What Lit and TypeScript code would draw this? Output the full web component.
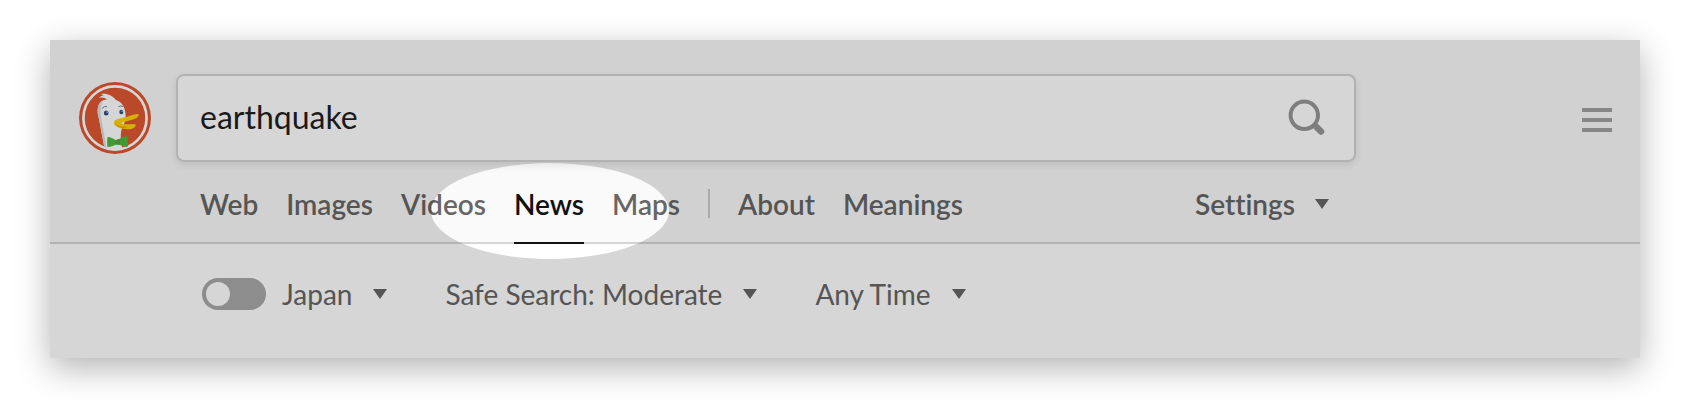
import { LitElement, html, css } from "lit";
import { customElement, property, state } from "lit/decorators.js";

const caret = html`<svg class="caret" width="14" height="10" viewBox="0 0 14 10" aria-hidden="true"><path d="M0 0h14L7 10z" fill="currentColor"/></svg>`;

@customElement("duck-logo")
export class DuckLogo extends LitElement {
  static styles = css`
    :host { display: block; }
    svg { display: block; width: 100%; }
  `;
  render() {
    return html`
      <svg viewBox="0 0 72 72" aria-hidden="true">
        <defs><clipPath id="disc"><circle cx="36" cy="36" r="31"/></clipPath></defs>
        <circle cx="36" cy="36" r="36" fill="#de5833"/>
        <circle cx="36" cy="36" r="31.600" fill="none" stroke="#fff" stroke-width="2.700"/>
        <g clip-path="url(#disc)">
          <path d="M26 69 L20 37 C17 28 19 20 25 18 L28 17.500 C26 15.500 23 15 20 15.800 C22 13.800 24 13.500 25 13.600 L22 12 C28 11 34 14 37 18 C43 20 46 25 46.500 32 C47 36 46 40 44 44 C41 50 41 57 44 69z" fill="#fff"/>
          <path d="M20 37 C17 28 19 20 24 18.500 C20 25 22 36 24 46 L28 69 L26 69z" fill="#ddd"/>
        </g>
        <path d="M35 41 C35 38 38 37 43 36 C49 35 54 32 59 32 C61 33 59 36 54 37.500 C49 39 44 40 42 41 C44 42.500 49 42.500 55 42 C58 42 57 46 52 47 C45 48 35 45 35 41z" fill="#fdd20a"/>
        <path d="M36 41.500 C38 44 44 44.500 49 45 C45 47.500 36 45 36 41.500z" fill="#f3ad00"/>
        <ellipse cx="27.200" cy="31" rx="2.400" ry="2.500" fill="#2d4f8e"/>
        <circle cx="28.100" cy="30.100" r=".7" fill="#fff"/>
        <ellipse cx="42.300" cy="30" rx="2" ry="2.300" fill="#2d4f8e"/>
        <circle cx="43" cy="29.200" r=".6" fill="#fff"/>
        <path d="M23 26.500 Q25 23.800 28 24.500 M39.500 24.500 Q41.500 23.500 44 24.500" fill="none" stroke="#6e86b6" stroke-width="1"/>
        <path d="M28.500 55 C32 55 35 57 37 58.500 C40 57 44 54.500 48 54 C49 57 49 61 48.500 65 C44 64.500 41 63 38.500 62 C35 63 32 65 28.500 65 C28 62 28 59 28.500 55z" fill="#4cba3c"/>
        <path d="M36.500 58 L40.500 57 C41.300 59 41.300 61 40.500 63 L36.500 62.500z" fill="#5b9e4d"/>
      </svg>`;
  }
}

@customElement("filter-select")
export class FilterSelect extends LitElement {
  @property() label = "";
  @property({ attribute: false }) options: string[] = [];
  static styles = css`
    :host { display: block; }
    .field { display: flex; align-items: center; gap: 21px; }
    select {
      appearance: none; field-sizing: content; border: 0; margin: 0; padding: 0;
      background: transparent; color: inherit; font: inherit; line-height: 36px; cursor: pointer;
    }
    .caret { flex: none; pointer-events: none; }
  `;
  render() {
    return html`<label class="field">
      <select aria-label=${this.label}>${this.options.map((o) => html`<option>${o}</option>`)}</select>${caret}
    </label>`;
  }
}

@customElement("app-root")
export class AppRoot extends LitElement {
  @state() private query = "earthquake";

  static styles = css`
    :host {
      display: block; background: #fff; color: #666; padding: 40px 50px 60px;
      font-family: Lato, "Open Sans", sans-serif; font-size: 28px; line-height: 36px;
      font-variant-ligatures: none;
    }
    * { box-sizing: border-box; }
    .panel { position: relative; overflow: hidden; background: #fff; box-shadow: 0 10px 32px rgba(0, 0, 0, .3); }
    .grid { display: grid; grid-template-columns: 72px minmax(0, 1180px) minmax(30px, 1fr); column-gap: 25px; padding: 0 28px 0 29px; }
    .header { background: #fafafa; border-bottom: 2px solid #d5d5d5; padding-top: 34px; align-items: center; }
    button { border: 0; padding: 0; margin: 0; background: none; font: inherit; color: inherit; cursor: pointer; }
    .search {
      display: flex; align-items: center; height: 88px; padding: 0 28px 0 22px;
      background: #fff; border: 2px solid #d4d4d4; border-radius: 8px; box-shadow: 0 3px 8px rgba(0, 0, 0, .1);
    }
    .query { flex: 1; min-width: 0; border: 0; outline: 0; padding: 0 0 2px; background: none; color: #1f1f1f; font: inherit; font-size: 32px; line-height: 44px; }
    .find { color: #979797; }
    svg { display: block; }
    .menu { justify-self: end; display: grid; gap: 6px; width: 30px; padding-top: 4px; }
    .bar { height: 4px; background: #a1a1a1; }
    .tabs { grid-column: 2; display: flex; align-items: stretch; gap: 28px; height: 80px; padding: 0 27px 0 24px; font-weight: 600; }
    .tab { color: inherit; text-decoration: none; white-space: nowrap; padding: 24px 0 20px; }
    .current { position: relative; color: #111; }
    .current::after { content: ""; position: absolute; left: 0; right: 0; bottom: -2px; height: 2px; background: #111; z-index: 3; }
    .spotlight {
      position: absolute; z-index: 2; width: 238px; height: 96px; left: 50%; top: 1px; margin-left: -118px;
      border-radius: 50%; box-shadow: 0 0 0 2400px rgba(0, 0, 0, .16); pointer-events: none;
    }
    .divider { width: 2px; height: 29px; margin: 27px 0 0; background: #cbcbcb; }
    .settings { display: flex; align-items: center; gap: 20px; margin-left: auto; padding: 24px 0 20px; font-weight: 600; }
    .filters { padding-top: 32px; padding-bottom: 46px; }
    .row { grid-column: 2; display: flex; align-items: center; gap: 58px; padding-left: 26px; white-space: nowrap; }
    .region { display: flex; align-items: center; gap: 16px; }
    .toggle { appearance: none; display: block; flex: none; width: 64px; height: 32px; margin: 0; padding: 4px; border-radius: 16px; background: #a8a8a8; cursor: pointer; }
    .toggle::before { content: ""; display: block; width: 24px; height: 24px; border-radius: 50%; background: #fff; }
    .toggle:checked::before { margin-left: auto; }
  `;

  render() {
    return html`
      <main class="panel">
        <header class="header grid">
          <duck-logo></duck-logo>
          <form class="search" role="search" @submit=${(e: Event) => e.preventDefault()}>
            <input class="query" type="text" aria-label="Search" .value=${this.query}
              @input=${(e: Event) => (this.query = (e.target as HTMLInputElement).value)}>
            <button class="find" aria-label="Search">
              <svg width="38" height="38" viewBox="0 0 38 38" fill="none" stroke="currentColor">
                <circle cx="16.300" cy="16.300" r="13.700" stroke-width="4"/>
                <path d="M25.500 25.500l3 3" stroke-width="4"/>
                <path d="M28.500 28l4.500 4.500" stroke-width="6.500" stroke-linecap="round"/>
              </svg>
            </button>
          </form>
          <button class="menu" aria-label="Menu">
            <span class="bar"></span><span class="bar"></span><span class="bar"></span>
          </button>
          <nav class="tabs">
            <a class="tab" href="#web">Web</a>
            <a class="tab" href="#images">Images</a>
            <a class="tab" href="#videos">Videos</a>
            <a class="tab current" href="#news" aria-current="page">News<span class="spotlight"></span></a>
            <a class="tab" href="#maps">Maps</a>
            <span class="divider"></span>
            <a class="tab" href="#about">About</a>
            <a class="tab" href="#meanings">Meanings</a>
            <button class="settings">Settings ${caret}</button>
          </nav>
        </header>
        <section class="filters grid">
          <div class="row">
            <div class="region">
              <input class="toggle" type="checkbox" aria-label="Limit results to region">
              <filter-select label="Region" .options=${["Japan"]}></filter-select>
            </div>
            <filter-select label="Safe search" .options=${["Safe Search: Moderate"]}></filter-select>
            <filter-select label="Time" .options=${["Any Time"]}></filter-select>
          </div>
        </section>
      </main>`;
  }
}
